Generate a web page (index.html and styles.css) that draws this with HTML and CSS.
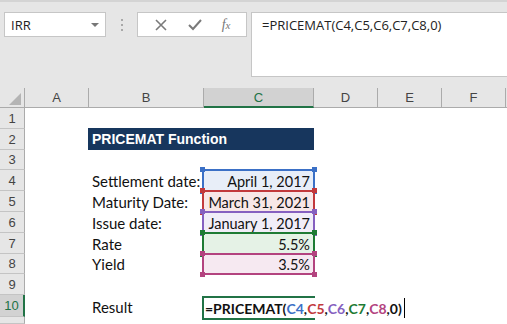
FILE: index.html
```html
<!DOCTYPE html>
<html lang="en">
<head>
    <meta charset="UTF-8">
    <title>PRICEMAT</title>
    <link rel="stylesheet" href="styles.css">
</head>
<body>

    <!-- Formula bar -->
    <div class="toolbar">
        <div class="namebox">
            <span>IRR</span>
            <span class="caret"></span>
        </div>
        <div class="grip"><i></i><i></i><i></i></div>
        <div class="fxbuttons">
            <svg width="14" height="14" viewBox="0 0 14 14"><path d="M2 2 L12 12 M12 2 L2 12" stroke="#7a7a7a" stroke-width="1.6" fill="none"/></svg>
            <svg width="16" height="14" viewBox="0 0 16 14"><path d="M2 7 L6 11 L14 2" stroke="#7a7a7a" stroke-width="2" fill="none"/></svg>
            <span class="fx">f<small>x</small></span>
        </div>
        <div class="formula">=PRICEMAT(C4,C5,C6,C7,C8,0)</div>
    </div>

    <!-- Sheet -->
    <div class="sheet">
        <div class="hd corner"><span class="tri"></span></div>
        <div class="hd col">A</div>
        <div class="hd col">B</div>
        <div class="hd col active">C</div>
        <div class="hd col">D</div>
        <div class="hd col">E</div>
        <div class="hd col">F</div>
        <div class="hd col last"></div>

        <div class="hd row r1">1</div>
        <div class="hd row r2">2</div>
        <div class="hd row r3">3</div>
        <div class="hd row r4">4</div>
        <div class="hd row r5">5</div>
        <div class="hd row r6">6</div>
        <div class="hd row r7">7</div>
        <div class="hd row r8">8</div>
        <div class="hd row r9">9</div>
        <div class="hd row r10 active">10</div>
        <div class="hd row r11"></div>

        <div class="title">PRICEMAT Function</div>

        <div class="label r4">Settlement date:</div>
        <div class="label r5">Maturity Date:</div>
        <div class="label r6">Issue date:</div>
        <div class="label r7">Rate</div>
        <div class="label r8">Yield</div>
        <div class="label r10">Result</div>

        <div class="val r4 ref blue">April 1, 2017</div>
        <div class="val r5 ref red">March 31, 2021</div>
        <div class="val r6 ref purple">January 1, 2017</div>
        <div class="val r7 ref green">5.5%</div>
        <div class="val r8 ref pink">3.5%</div>

        <div class="edit r10">
            <span class="etext">=PRICEMAT(<b class="t-blue">C4</b>,<b class="t-red">C5</b>,<b class="t-purple">C6</b>,<b class="t-green">C7</b>,<b class="t-pink">C8</b>,0)<i class="cursor"></i></span>
        </div>
    </div>

</body>
</html>
```

FILE: styles.css
```css
* {
    margin: 0;
    padding: 0;
    box-sizing: border-box;
}
body {
    width: 507px;
    height: 324px;
    overflow: hidden;
    background: #fff;
    font-family: "Open Sans", "Noto Sans", sans-serif;
}

/* Formula bar */
.toolbar {
    height: 88px;
    background: #e6e6e6;
    border-top: 2px solid #d4d4d4;
    display: flex;
    align-items: flex-start;
    padding: 10px 0 0 4px;
}
.namebox {
    width: 102px;
    height: 25px;
    background: #fff;
    border: 1px solid #c6c6c6;
    display: flex;
    align-items: center;
    justify-content: space-between;
    padding: 0 6px 0 6px;
    font-size: 13px;
    color: #222;
}
.caret {
    width: 0;
    height: 0;
    border-left: 4px solid transparent;
    border-right: 4px solid transparent;
    border-top: 4px solid #777;
}
.grip {
    width: 31px;
    height: 25px;
    display: flex;
    flex-direction: column;
    align-items: center;
    justify-content: center;
    gap: 3px;
}
.grip i {
    width: 2px;
    height: 2px;
    background: #a8a8a8;
}
.fxbuttons {
    width: 110px;
    height: 25px;
    background: #fff;
    border: 1px solid #c6c6c6;
    display: flex;
    align-items: center;
    justify-content: space-around;
    padding: 0 6px;
}
.fx {
    font-family: "Liberation Serif", serif;
    font-style: italic;
    font-size: 14px;
    color: #777;
}
.fx small {
    font-size: 11px;
}
.formula {
    margin-left: 4px;
    flex: 1;
    height: 65px;
    background: #fff;
    border: 1px solid #c6c6c6;
    border-right: none;
    padding: 3px 10px;
    font-size: 13px;
    color: #222;
}

/* Sheet grid */
.sheet {
    display: grid;
    grid-template-columns: 25px 64px 115px 110px 64px 64px 64px 1fr;
    grid-template-rows: 20px 21px 21px 20px 21px 21px 21px 21px 20px 21px 22px 1fr;
    height: 236px;
    font-family: "Lato", "Liberation Sans", sans-serif;
    font-size: 15px;
    color: #111;
}
.hd {
    background: #e6e6e6;
    color: #444;
    font-family: "Liberation Sans", sans-serif;
    font-size: 13px;
    display: flex;
    align-items: center;
    justify-content: center;
}
.col {
    grid-row: 1;
    border-right: 1px solid #ababab;
    border-bottom: 1px solid #ababab;
}
.col.last {
    border-right: none;
}
.col.active {
    background: #d2d2d2;
    color: #217346;
    border-bottom: 2px solid #217346;
}
.corner {
    grid-row: 1;
    grid-column: 1;
    border-right: 1px solid #ababab;
    border-bottom: 1px solid #ababab;
    align-items: flex-end;
    justify-content: flex-end;
    padding: 0 3px 2px 0;
}
.tri {
    width: 0;
    height: 0;
    border-left: 12px solid transparent;
    border-bottom: 12px solid #b4b4b4;
}
.row {
    grid-column: 1;
    border-right: 1px solid #ababab;
    border-bottom: 1px solid #c4c4c4;
}
.row.active {
    background: #d2d2d2;
    color: #217346;
    border-right: 2px solid #217346;
}
.r1 { grid-row: 2; }
.r2 { grid-row: 3; }
.r3 { grid-row: 4; }
.r4 { grid-row: 5; }
.r5 { grid-row: 6; }
.r6 { grid-row: 7; }
.r7 { grid-row: 8; }
.r8 { grid-row: 9; }
.r9 { grid-row: 10; }
.r10 { grid-row: 11; }
.r11 { grid-row: 12; }

.title {
    grid-row: 3;
    grid-column: 3 / 5;
    margin: -1px 0 0 -1px;
    background: #17365d;
    color: #fff;
    font-family: "Liberation Sans", sans-serif;
    font-weight: bold;
    font-size: 14px;
    display: flex;
    align-items: center;
    padding-left: 4px;
}

.label {
    grid-column: 3;
    display: flex;
    align-items: flex-end;
    padding: 0 0 1px 3px;
    white-space: nowrap;
}
.val {
    grid-column: 4;
    display: flex;
    align-items: flex-end;
    justify-content: flex-end;
    padding: 0 4px 1px 0;
    white-space: nowrap;
    position: relative;
    font-size: 14.5px;
}

/* Reference highlight boxes */
.ref::before {
    content: "";
    position: absolute;
    left: -2px;
    top: -1px;
    right: -1px;
    bottom: -1px;
    border: 2px solid var(--c);
}
.ref::after {
    content: "";
    position: absolute;
    left: -4px;
    top: -3px;
    right: -3px;
    bottom: -3px;
    background:
        linear-gradient(var(--c), var(--c)) left top / 5px 5px no-repeat,
        linear-gradient(var(--c), var(--c)) right top / 5px 5px no-repeat,
        linear-gradient(var(--c), var(--c)) left bottom / 5px 5px no-repeat,
        linear-gradient(var(--c), var(--c)) right bottom / 5px 5px no-repeat;
}
.ref.blue { --c: #3b70c6; background: #e8eef8; }
.ref.red { --c: #c2393c; background: #f8e7e7; }
.ref.purple { --c: #8660c0; background: #f1edf8; }
.ref.green { --c: #1e7b34; background: #e5f2e6; }
.ref.pink { --c: #b3437f; background: #f6e9f1; }

.t-blue { color: #3b70c6; }
.t-red { color: #c2393c; }
.t-purple { color: #8660c0; }
.t-green { color: #1e7b34; }
.t-pink { color: #b3437f; }

/* Active edit cell */
.edit {
    grid-column: 4;
    position: relative;
    margin: 1px -1px -3px -2px;
    border: 2px solid #217346;
}
.etext {
    position: absolute;
    left: 1px;
    top: 0;
    bottom: 0;
    display: flex;
    align-items: center;
    background: #fff;
    font-weight: bold;
    font-size: 14px;
    white-space: nowrap;
    padding-right: 1px;
}
.etext b {
    font-weight: bold;
}
.cursor {
    width: 1px;
    align-self: stretch;
    background: #000;
    margin-left: 2px;
}
```
